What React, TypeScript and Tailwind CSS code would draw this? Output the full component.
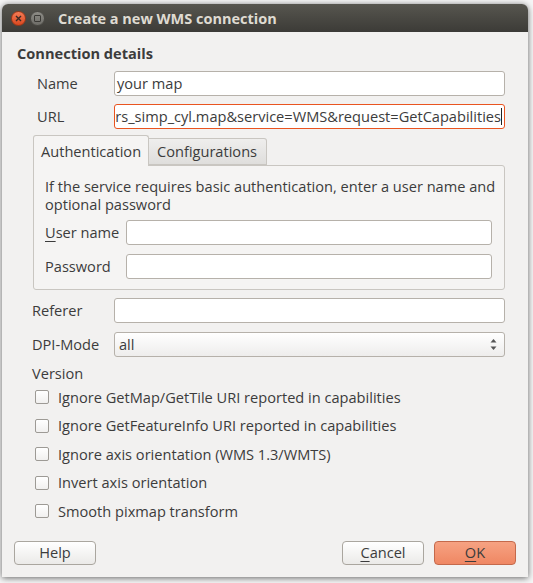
import React from "react";

function TitleBar() {
  return (
    <div className="h-[28px] shrink-0 flex items-center bg-gradient-to-b from-[#57564f] to-[#3c3b37] rounded-t-[6px] pl-[9px]">
      <div className="w-[15px] h-[15px] rounded-full bg-gradient-to-b from-[#f47b55] to-[#d9471d] border border-[#9c3718] flex items-center justify-center">
        <svg width="7" height="7" viewBox="0 0 7 7">
          <path d="M1 1L6 6M6 1L1 6" stroke="#3a2a25" strokeWidth="1.4" />
        </svg>
      </div>
      <div className="ml-[4px] w-[15px] h-[15px] rounded-full bg-gradient-to-b from-[#8d8c86] to-[#6e6d68] border border-[#4b4a45] flex items-center justify-center">
        <div className="w-[7px] h-[7px] border border-[#3b3a36] rounded-[1px]" />
      </div>
      <span className="ml-[13px] font-bold text-[14.5px] text-[#dfdbd2]">
        Create a new WMS connection
      </span>
    </div>
  );
}

function TextField({
  value,
  focused,
  className,
}: {
  value?: string;
  focused?: boolean;
  className?: string;
}) {
  return (
    <div
      className={`h-[25px] flex items-center justify-end overflow-hidden bg-white rounded-[3px] border ${
        focused ? "border-[#e95420]" : "border-[#b6b1aa]"
      } ${className ?? ""}`}
    >
      {focused ? (
        <span className="whitespace-nowrap pr-[2px] flex items-center">
          {value}
          <span className="inline-block w-[1px] h-[17px] bg-[#222]" />
        </span>
      ) : (
        <span className="w-full pl-[2px] whitespace-nowrap">{value}</span>
      )}
    </div>
  );
}

function Check({ label }: { label: string }) {
  return (
    <div className="h-[28.5px] flex items-center pl-[33px]">
      <div className="w-[14px] h-[14px] rounded-[2px] border border-[#9d9a95] bg-gradient-to-b from-white to-[#f1f0ef]" />
      <span className="ml-[9px]">{label}</span>
    </div>
  );
}

function Button({
  children,
  primary,
  className,
}: {
  children: React.ReactNode;
  primary?: boolean;
  className?: string;
}) {
  return (
    <div
      className={`h-[24px] w-[82px] flex items-center justify-center rounded-[4px] border ${
        primary
          ? "bg-gradient-to-b from-[#f6a282] to-[#ef8763] border-[#c4694b]"
          : "bg-gradient-to-b from-white to-[#ebeae8] border-[#aaa69f]"
      } ${className ?? ""}`}
    >
      {children}
    </div>
  );
}

export default function App() {
  return (
    <div className="w-[533px] h-[583px] bg-[#f6f6f6] pl-[2px] pt-[4px] font-['Open_Sans',sans-serif] text-[14.6px] leading-[17px] text-[#3c3c3c]">
      <div className="w-[526px] h-[573px] flex flex-col bg-[#f2f1f0] rounded-t-[6px] shadow-[0_1px_6px_rgba(0,0,0,0.6)]">
        <TitleBar />

        <div className="mt-[13px] pl-[15px] h-[18px] font-bold text-[#3c3c3c]">
          Connection details
        </div>

        <div className="mt-[8px] flex items-center pl-[35px] pr-[23px]">
          <span className="w-[77px]">Name</span>
          <TextField value="your map" className="flex-1 !justify-start" />
        </div>
        <div className="mt-[8px] flex items-center pl-[35px] pr-[23px]">
          <span className="w-[77px]">URL</span>
          <TextField
            value="rs_simp_cyl.map&service=WMS&request=GetCapabilities"
            focused
            className="flex-1"
          />
        </div>

        <div className="mt-[6px] pl-[31px] pr-[23px]">
          <div className="flex items-end h-[30px]">
            <div className="h-[31px] -mb-[1px] w-[116px] flex items-center pl-[7px] bg-[#f5f4f3] border border-b-0 border-[#c9c6c1] rounded-t-[3px] relative z-10">
              Authentication
            </div>
            <div className="h-[27px] w-[118px] flex items-center pl-[8px] bg-gradient-to-b from-[#efeeed] to-[#dfdedc] border border-l-0 border-[#c9c6c1] rounded-tr-[3px]">
              Configurations
            </div>
          </div>
          <div className="h-[125px] bg-[#f5f4f3] border border-[#c9c6c1] rounded-b-[3px] rounded-tr-[3px] pt-[11px] pl-[11px] pr-[10px]">
            <p className="whitespace-nowrap leading-[18px]">
              If the service requires basic authentication, enter a user name and
              <br />
              optional password
            </p>
            <div className="mt-[7px] flex items-center pr-[2px]">
              <span className="w-[81px]">
                <span className="underline underline-offset-[3px]">U</span>ser name
              </span>
              <TextField className="flex-1" />
            </div>
            <div className="mt-[9px] flex items-center pr-[2px]">
              <span className="w-[81px]">Password</span>
              <TextField className="flex-1" />
            </div>
          </div>
        </div>

        <div className="mt-[8px] flex items-center pl-[30px] pr-[23px]">
          <span className="w-[82px]">Referer</span>
          <TextField className="flex-1" />
        </div>
        <div className="mt-[9px] flex items-center pl-[30px] pr-[23px]">
          <span className="w-[82px]">DPI-Mode</span>
          <div className="flex-1 h-[25px] flex items-center justify-between rounded-[3px] border border-[#b6b1aa] bg-gradient-to-b from-white to-[#eeedec] pl-[4px] pr-[7px]">
            <span>all</span>
            <svg width="7" height="13" viewBox="0 0 7 13">
              <path d="M0.5 4.5L3.5 1L6.5 4.5Z" fill="#555" />
              <path d="M0.5 8.5L3.5 12L6.5 8.5Z" fill="#555" />
            </svg>
          </div>
        </div>

        <div className="mt-[7px] pl-[30px] h-[18px] flex items-center">Version</div>
        <div className="mt-[1px]">
          <Check label="Ignore GetMap/GetTile URI reported in capabilities" />
          <Check label="Ignore GetFeatureInfo URI reported in capabilities" />
          <Check label="Ignore axis orientation (WMS 1.3/WMTS)" />
          <Check label="Invert axis orientation" />
          <Check label="Smooth pixmap transform" />
        </div>

        <div className="mt-[15px] flex items-center px-[12px]">
          <Button>Help</Button>
          <div className="flex-1" />
          <Button>
            <span className="underline underline-offset-[3px]">C</span>ancel
          </Button>
          <Button primary className="ml-[10px]">
            <span className="underline underline-offset-[3px]">O</span>K
          </Button>
        </div>
      </div>
    </div>
  );
}
